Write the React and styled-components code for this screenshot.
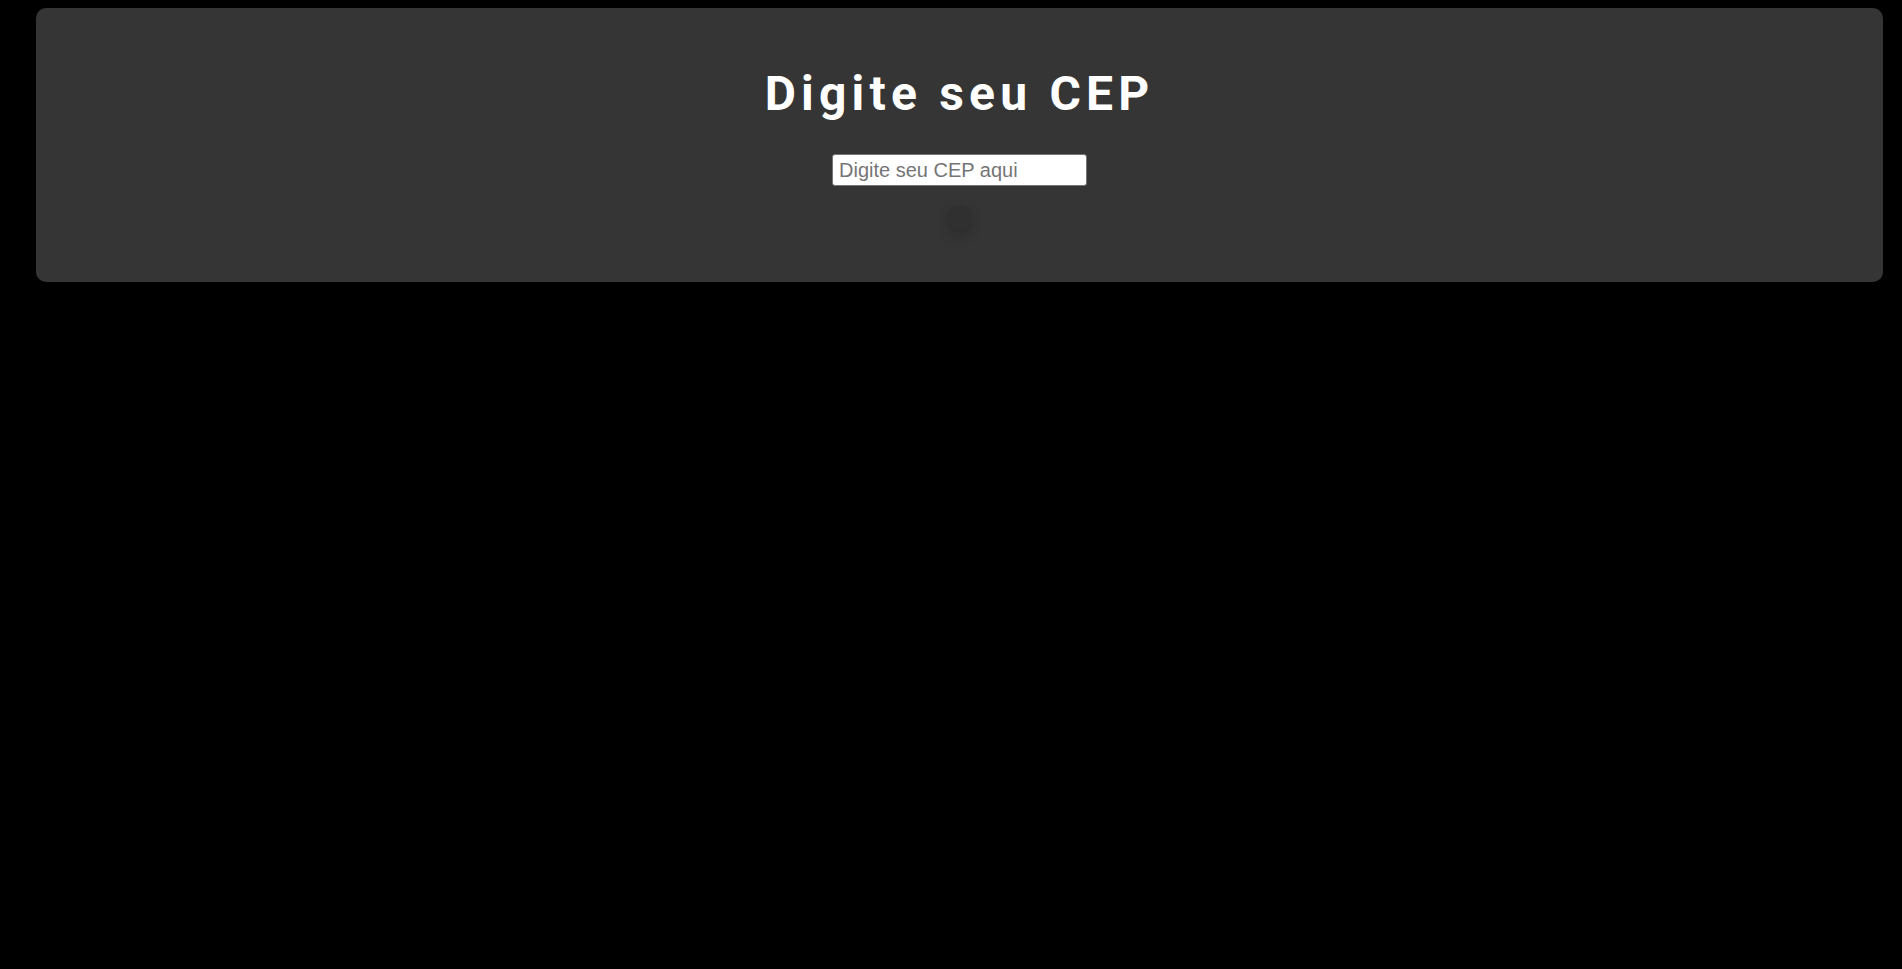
import React from "react";
import styled, { createGlobalStyle } from "styled-components";

const GlobalStyle = createGlobalStyle`
  html, body {
    margin: 0;
    padding: 0;
    background: #000000;
  }
  body {
    font-family: "Liberation Sans", Arial, sans-serif;
  }
`;

const Page = styled.div`
  min-height: 969px;
  padding: 8px 19px 0 36px;
  box-sizing: border-box;
`;

const Card = styled.section`
  background: #353535;
  border-radius: 10px;
  height: 274px;
  box-sizing: border-box;
  padding-top: 62px;
  display: flex;
  flex-direction: column;
  align-items: center;
`;

const Title = styled.h1`
  margin: 0;
  font-family: Roboto, "Noto Sans", sans-serif;
  font-weight: 700;
  font-size: 48px;
  line-height: 48px;
  letter-spacing: 5.2px;
  color: #ffffff;
`;

const Input = styled.input`
  margin-top: 36px;
  width: 255px;
  height: 32px;
  box-sizing: border-box;
  padding: 1px 6px;
  border: 1px solid #767676;
  border-radius: 3px;
  font-family: "Liberation Sans", Arial, sans-serif;
  font-size: 20px;
  color: #222;
  background: #ffffff;
  outline: none;

  &::placeholder {
    color: #757575;
  }
`;

const Loader = styled.div`
  margin-top: 19px;
  width: 25px;
  height: 25px;
  border-radius: 50%;
  background: #303030;
  box-shadow: 0 6px 14px rgba(0, 0, 0, 0.18);
`;

export default function App() {
  return (
    <>
      <GlobalStyle />
      <Page>
        <Card>
          <Title>Digite seu CEP</Title>
          <Input type="text" placeholder="Digite seu CEP aqui" />
          <Loader />
        </Card>
      </Page>
    </>
  );
}
